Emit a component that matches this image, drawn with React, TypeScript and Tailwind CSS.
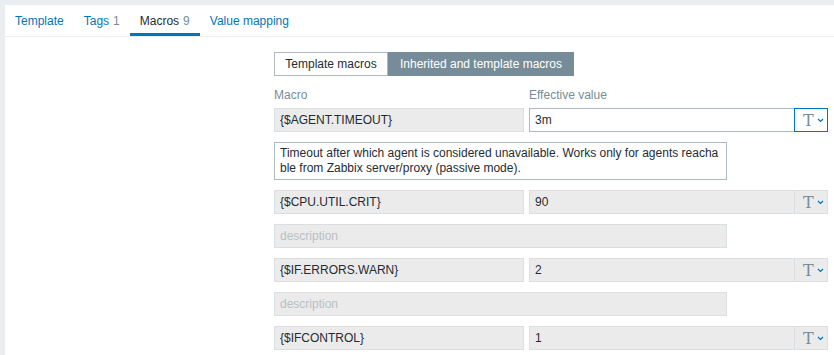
import React from 'react';

type MacroRow = {
  macro: string;
  value: string;
  description?: string;
  focused?: boolean;
};

const rows: MacroRow[] = [
  {
    macro: '{$AGENT.TIMEOUT}',
    value: '3m',
    description:
      'Timeout after which agent is considered unavailable. Works only for agents reachable from Zabbix server/proxy (passive mode).',
    focused: true,
  },
  { macro: '{$CPU.UTIL.CRIT}', value: '90' },
  { macro: '{$IF.ERRORS.WARN}', value: '2' },
  { macro: '{$IFCONTROL}', value: '1' },
];

const tabs = [
  { label: 'Template' },
  { label: 'Tags', count: 1 },
  { label: 'Macros', count: 9, active: true },
  { label: 'Value mapping' },
];

function TypeButton({ focused }: { focused?: boolean }) {
  return (
    <div
      className={
        focused
          ? 'flex h-[24px] w-[34px] items-center border border-[#0275b8] bg-white pl-[8px]'
          : 'flex h-[24px] w-[34px] items-center border border-[#d9dfe3] bg-[#ebebeb] pl-[8px]'
      }
    >
      <span className="mt-[1px] font-['DejaVu_Serif',serif] text-[16px] leading-none text-[#768d99]">T</span>
      <svg width="7" height="5" viewBox="0 0 7 5" className="ml-[3px]">
        <path d="M1 1 L3.5 3.5 L6 1" fill="none" stroke="#0275b8" strokeWidth="1.2" />
      </svg>
    </div>
  );
}

export default function App() {
  return (
    <div className="min-h-screen bg-[#ebeef0] pl-[5px] pt-[5px] font-['Liberation_Sans',Arial,sans-serif] text-[12px] text-[#1f2c33]">
      <div className="h-[350px] bg-white">
        {/* Tabs */}
        <nav className="flex h-[32px] border-b border-[#ebeef0]">
          {tabs.map((t) => (
            <div key={t.label} className="relative flex h-[31px] items-center px-[10px]">
              <span className={t.active ? 'text-[#1f2c33]' : 'text-[#0275b8]'}>{t.label}</span>
              {t.count !== undefined && <span className="ml-[4px] text-[#768d99]">{t.count}</span>}
              {t.active && <div className="absolute bottom-0 left-0 right-0 h-[3px] bg-[#0275b8]" />}
            </div>
          ))}
        </nav>

        {/* Form */}
        <div className="pl-[269px] pt-[15px]">
          <div className="flex h-[24px]">
            <div className="flex w-[114px] items-center justify-center border border-[#acbbc2] bg-white">
              Template macros
            </div>
            <div className="flex w-[186px] items-center justify-center border border-[#768d99] bg-[#768d99] text-white">
              Inherited and template macros
            </div>
          </div>

          <div className="mt-[10px] flex h-[18px] items-center text-[#768d99]">
            <div className="w-[255px]">Macro</div>
            <div>Effective value</div>
          </div>

          <div className="mt-[4px] flex flex-col gap-[10px]">
            {rows.map((r) => (
              <React.Fragment key={r.macro}>
                <div className="flex">
                  <div className="flex h-[24px] w-[250px] items-center border border-[#d9dfe3] bg-[#ebebeb] px-[5px]">
                    {r.macro}
                  </div>
                  <div
                    className={
                      r.focused
                        ? 'ml-[5px] flex h-[24px] w-[265px] items-center border border-r-0 border-[#acbbc2] bg-white px-[5px]'
                        : 'ml-[5px] flex h-[24px] w-[265px] items-center border border-r-0 border-[#d9dfe3] bg-[#ebebeb] px-[5px]'
                    }
                  >
                    {r.value}
                  </div>
                  <TypeButton focused={r.focused} />
                </div>
                {r.description ? (
                  <div className="h-[38px] w-[453px] break-all border border-[#acbbc2] bg-white px-[5px] pt-[3px] leading-[15px]">
                    {r.description}
                  </div>
                ) : (
                  r.macro !== '{$IFCONTROL}' && (
                    <div className="flex h-[24px] w-[453px] items-center border border-[#d9dfe3] bg-[#ebebeb] px-[5px] text-[#b9c0c4]">
                      description
                    </div>
                  )
                )}
              </React.Fragment>
            ))}
          </div>
        </div>
      </div>
    </div>
  );
}
